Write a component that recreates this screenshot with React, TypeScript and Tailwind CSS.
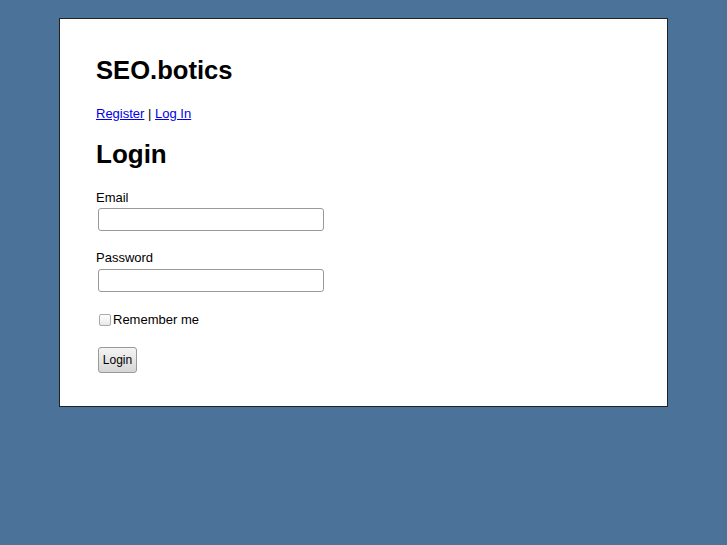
export default function App() {
  return (
    <div className="min-h-[545px] bg-[#4b7299] pt-[18px]" style={{ fontFamily: '"Liberation Sans", Arial, sans-serif' }}>
      <div className="ml-[59px] w-[609px] h-[389px] border border-[#222] bg-white pl-[36px] pt-[35px]">
        <h1 className="text-[25.6px] font-bold leading-[32px] text-black">SEO.botics</h1>
        <p className="mt-[20px] text-[13px] leading-[16px] text-black">
          <a href="#" className="text-[#0000ee] underline">Register</a> |{" "}
          <a href="#" className="text-[#0000ee] underline">Log In</a>
        </p>
        <h2 className="mt-[17px] text-[26px] font-bold leading-[30px] text-black">Login</h2>
        <form className="mt-[21px] text-[13px] text-black">
          <div>
            <label className="block leading-[16px]">Email</label>
            <input type="text" className="ml-[2px] mt-[2px] block h-[23px] w-[226px] rounded-[3px] border border-[#999] bg-white" />
          </div>
          <div className="mt-[19px]">
            <label className="block leading-[16px]">Password</label>
            <input type="password" className="ml-[2px] mt-[3px] block h-[23px] w-[226px] rounded-[3px] border border-[#999] bg-white" />
          </div>
          <div className="mt-[20px] flex items-center">
            <span className="ml-[3px] inline-block h-[12px] w-[12px] rounded-[2px] border border-[#aaa] bg-gradient-to-b from-white to-[#e8e8e8]" />
            <span className="ml-[2px] leading-[16px]">Remember me</span>
          </div>
          <button type="button" className="ml-[2px] mt-[19px] block h-[26px] w-[39px] rounded-[3px] border border-[#999] bg-gradient-to-b from-[#f4f4f4] to-[#d6d6d6] text-[12px] text-black">
            Login
          </button>
        </form>
      </div>
    </div>
  );
}
